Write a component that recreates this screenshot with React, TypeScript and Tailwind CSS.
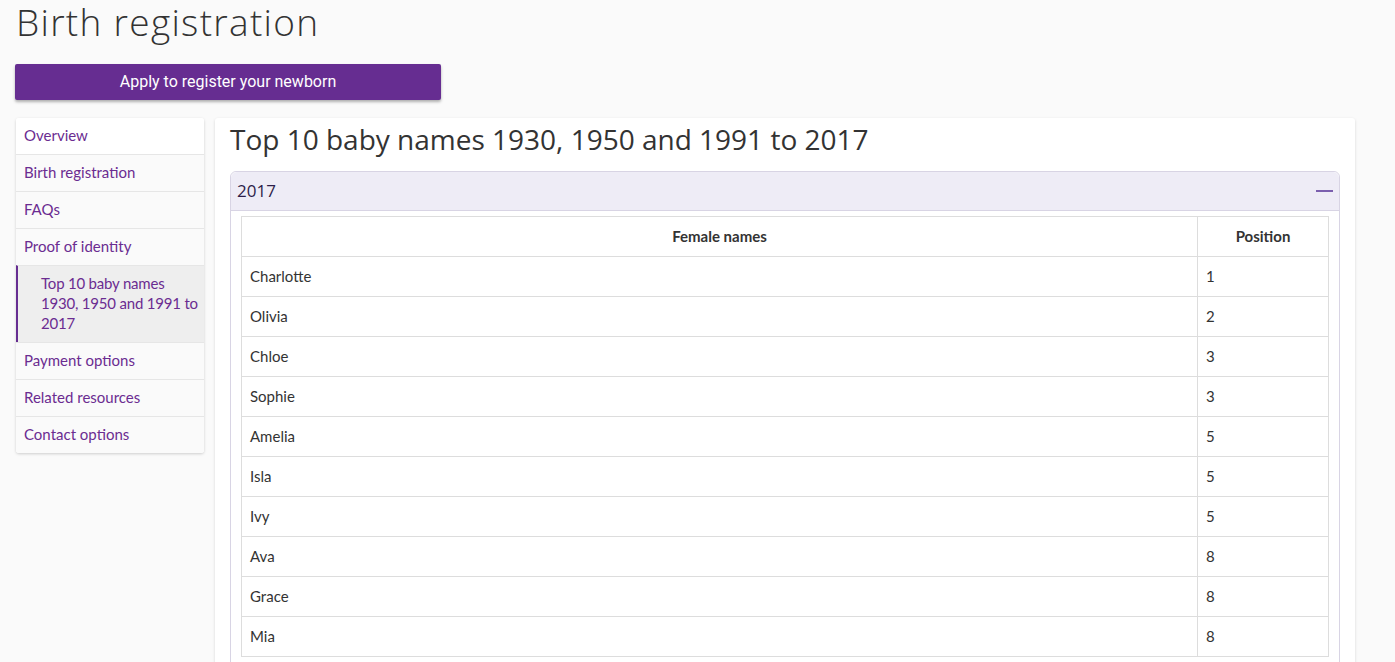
import React from "react";

const heading = { fontFamily: '"Open Sans", "Liberation Sans", sans-serif' };
const body = { fontFamily: 'Lato, "Liberation Sans", sans-serif' };

const nav: { label: string; lines?: string[]; active?: boolean }[] = [
  { label: "Overview" },
  { label: "Birth registration" },
  { label: "FAQs" },
  { label: "Proof of identity" },
  {
    label: "Top 10 baby names 1930, 1950 and 1991 to 2017",
    lines: ["Top 10 baby names", "1930, 1950 and 1991 to", "2017"],
    active: true,
  },
  { label: "Payment options" },
  { label: "Related resources" },
  { label: "Contact options" },
];

const rows: [string, string][] = [
  ["Charlotte", "1"],
  ["Olivia", "2"],
  ["Chloe", "3"],
  ["Sophie", "3"],
  ["Amelia", "5"],
  ["Isla", "5"],
  ["Ivy", "5"],
  ["Ava", "8"],
  ["Grace", "8"],
  ["Mia", "8"],
];

export default function App() {
  return (
    <div className="min-h-screen bg-[#fafafa] text-[#333]" style={body}>
      <div className="pl-[16px] pr-[40px]">
        <h1
          className="text-[37px] leading-[44px] font-light text-[#333] tracking-[1.3px]"
          style={heading}
        >
          Birth registration
        </h1>
        <div className="pt-[20px] -ml-px">
          <button
            className="w-[426px] h-[36px] bg-[#662d91] text-white text-[16px] rounded-[2px] shadow-[0_2px_3px_rgba(0,0,0,0.3)]"
            style={{ fontFamily: 'Roboto, "Liberation Sans", sans-serif' }}
          >
            Apply to register your newborn
          </button>
        </div>
        <div className="flex gap-[11px] mt-[18px] items-start">
          <nav className="w-[188px] shrink-0 rounded-[3px] shadow-[0_1px_3px_rgba(0,0,0,0.18)] overflow-hidden bg-white">
            {nav.map((n, i) => (
              <div
                key={n.label}
                className={
                  (i > 0 ? "border-t border-[#e6e6e6] " : "") +
                  (n.active
                    ? "bg-[#eeeeee] border-l-2 border-l-[#662d91] pl-[23px] pr-0 tracking-[-0.2px] "
                    : (i === 0 ? "bg-white " : "bg-[#fafafa] ") + "pl-[8px] pr-[8px] ") +
                  "pt-[7px] pb-[9px] text-[15px] leading-[20px] text-[#6b2c91]"
                }
              >
                {n.lines
                  ? n.lines.map((l) => (
                      <span key={l} className="block whitespace-nowrap">
                        {l}
                      </span>
                    ))
                  : n.label}
              </div>
            ))}
          </nav>
          <main className="flex-1 bg-white rounded-[3px] shadow-[0_1px_3px_rgba(0,0,0,0.15)] px-[15px] pt-[1px] pb-[20px] min-h-[560px]">
            <h2
              className="text-[28px] leading-[40px] text-[#333] font-normal"
              style={heading}
            >
              Top 10 baby names 1930, 1950 and 1991 to 2017
            </h2>
            <div className="mt-[12px] border border-[#d8d4e4] rounded-t-[6px]">
              <div className="h-[39px] bg-[#eeecf6] border-b border-[#d8d4e4] rounded-t-[6px] flex items-center justify-between px-[6px]">
                <span className="text-[17px] text-[#2d1e4a]" style={heading}>
                  2017
                </span>
                <span className="block w-[17px] h-[2px] bg-[#7b5fae]" />
              </div>
              <div className="px-[10px] pt-[5px] pb-[10px]">
                <table className="w-full border-collapse text-[15px] text-[#333]">
                  <thead>
                    <tr>
                      <th className="border border-[#dddddd] h-[40px] font-bold text-center">
                        Female names
                      </th>
                      <th className="border border-[#dddddd] h-[40px] w-[131px] font-bold text-center">
                        Position
                      </th>
                    </tr>
                  </thead>
                  <tbody>
                    {rows.map(([name, pos]) => (
                      <tr key={name}>
                        <td className="border border-[#dddddd] h-[40px] px-[8px]">{name}</td>
                        <td className="border border-[#dddddd] h-[40px] px-[8px]">{pos}</td>
                      </tr>
                    ))}
                  </tbody>
                </table>
              </div>
            </div>
          </main>
        </div>
      </div>
    </div>
  );
}
